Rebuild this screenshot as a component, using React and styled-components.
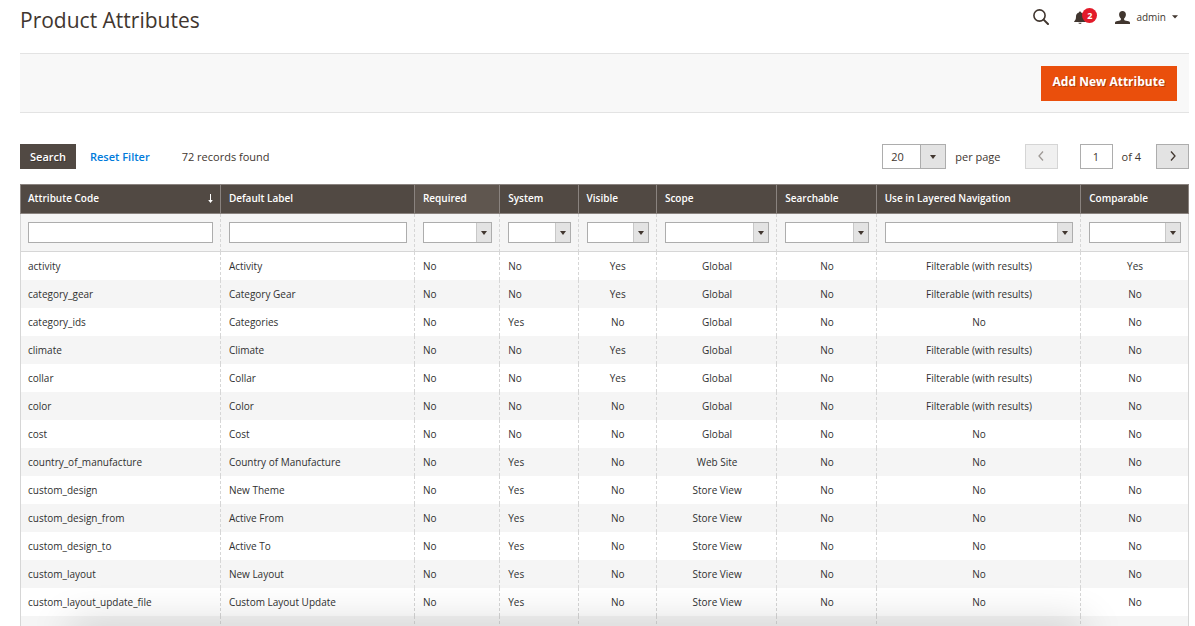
import { useState } from 'react';
import styled, { createGlobalStyle, css } from 'styled-components';

const GlobalStyle = createGlobalStyle`
  *, *::before, *::after {
    box-sizing: border-box;
  }

  body {
    margin: 0;
    background: #fff;
    color: #41362f;
    font-family: 'Open Sans', 'Noto Sans', sans-serif;
    font-size: 11px;
    line-height: 14px;
  }

  button, input, select {
    font: inherit;
    color: inherit;
    border-radius: 0;
    margin: 0;
  }
`;

const Page = styled.div`
  min-height: 100vh;
  padding: 0 6px 0 20px;
`;

const Header = styled.header`
  display: flex;
  align-items: flex-start;
  justify-content: space-between;
  height: 53px;
`;

const PageTitle = styled.h1`
  margin: 0;
  padding-top: 6px;
  font-size: 21px;
  font-weight: 400;
  line-height: 28px;
`;

const HeaderTools = styled.div`
  display: flex;
  align-items: center;
  height: 34px;
  padding-right: 11px;
`;

const ToolButton = styled.button`
  position: relative;
  display: flex;
  align-items: center;
  gap: 6px;
  margin-left: ${({ $space }) => $space || 0}px;
  padding: 0;
  border: 0;
  background: none;
  font-size: 10px;
  cursor: pointer;

  svg {
    display: block;
  }
`;

const Badge = styled.span`
  position: absolute;
  top: -3px;
  left: 8px;
  width: 15px;
  height: 15px;
  border-radius: 50%;
  background: #e21b2a;
  color: #fff;
  font-size: 9px;
  font-weight: 700;
  line-height: 15px;
  text-align: center;
`;

const ActionBar = styled.div`
  display: flex;
  align-items: center;
  justify-content: flex-end;
  height: 60px;
  padding: 0 12px;
  border: 1px solid #e3e3e3;
  border-width: 1px 0;
  background: #f8f8f8;
`;

const PrimaryButton = styled.button`
  height: 35px;
  padding: 0 12px 2px;
  border: 0;
  background: #ea4f0c;
  color: #fff;
  font-size: 12px;
  font-weight: 700;
  text-shadow: 1px 1px 0 rgba(0, 0, 0, 0.25);
  cursor: pointer;
`;

const Toolbar = styled.div`
  display: flex;
  align-items: center;
  justify-content: space-between;
  margin: 31px 0 15px;
`;

const ToolbarGroup = styled.div`
  display: flex;
  align-items: center;
`;

const SearchButton = styled.button`
  height: 25px;
  padding: 0 10px;
  border: 0;
  background: #514943;
  color: #fff;
  font-weight: 600;
  text-shadow: 1px 1px 0 rgba(0, 0, 0, 0.3);
  cursor: pointer;
`;

const ResetButton = styled.button`
  margin-left: 14px;
  padding: 0;
  border: 0;
  background: none;
  color: #007bdb;
  font-weight: 600;
  cursor: pointer;
`;

const RecordCount = styled.span`
  margin-left: 32px;
`;

const SelectBox = styled.span`
  position: relative;
  display: block;
  width: ${({ $large }) => ($large ? '64px' : '100%')};

  &::before {
    content: '';
    position: absolute;
    top: 1px;
    right: 1px;
    bottom: 1px;
    width: ${({ $large }) => ($large ? 25 : 15)}px;
    border-left: 1px solid ${({ $large }) => ($large ? '#adadad' : '#c8c8c8')};
    background: #e3e3e3;
    pointer-events: none;
  }

  &::after {
    content: '';
    position: absolute;
    top: ${({ $large }) => ($large ? 11 : 9)}px;
    right: ${({ $large }) => ($large ? 10 : 5)}px;
    border: 3px solid transparent;
    border-top: 4px solid #41362f;
    border-bottom: 0;
    pointer-events: none;
  }
`;

const fieldStyle = css`
  display: block;
  width: 100%;
  height: 21px;
  padding: 0 6px;
  border: 1px solid #adadad;
  background: #fff;
  appearance: none;
`;

const FilterInput = styled.input`
  ${fieldStyle}
`;

const Select = styled.select`
  ${fieldStyle}

  ${({ $large }) =>
    $large &&
    css`
      height: 25px;
      padding: 0 8px;
    `}
`;

const PerPageLabel = styled.label`
  margin: 0 24px 0 9px;
`;

const PagerButton = styled.button`
  display: flex;
  align-items: center;
  justify-content: center;
  width: 33px;
  height: 25px;
  padding: 0 0 2px;
  border: 1px solid #adadad;
  background: #e3e3e3;
  cursor: pointer;

  &:disabled {
    opacity: 0.5;
    cursor: default;
  }
`;

const PageInput = styled.input`
  width: 33px;
  height: 25px;
  margin-left: 22px;
  padding: 0;
  border: 1px solid #adadad;
  background: #fff;
  text-align: center;
`;

const PageTotal = styled.label`
  margin: 0 15px 0 9px;
`;

const Grid = styled.table`
  width: 100%;
  table-layout: fixed;
  border-collapse: separate;
  border-spacing: 0;
  font-size: 10px;
`;

const Col = styled.col`
  width: ${({ $width }) => $width}%;
`;

const HeadCell = styled.th`
  height: 30px;
  padding: 0 7px 2px 8px;
  border: 1px solid #8a837f;
  border-right-width: 0;
  background: ${({ $hovered }) => ($hovered ? '#5f564f' : '#514943')};
  color: #fff;
  font-weight: 600;
  text-align: left;
  white-space: nowrap;

  &:first-child {
    padding-left: 7px;
  }

  &:last-child {
    border-right-width: 1px;
  }
`;

const HeadLabel = styled.span`
  display: flex;
  align-items: center;
  justify-content: space-between;
`;

const cellBorders = css`
  border-left: 1px dashed #d6d6d6;

  &:first-child {
    padding-left: 7px;
    border-left: 1px solid #d6d6d6;
  }

  &:last-child {
    border-right: 1px solid #d6d6d6;
  }
`;

const FilterCell = styled.td`
  padding: 8px 7px 8px 8px;
  border-bottom: 1px solid #d6d6d6;
  background: #f5f5f5;
  ${cellBorders}
`;

const Cell = styled.td`
  height: 28px;
  padding: 0 7px 0 8px;
  color: #303030;
  text-align: ${({ $align }) => $align || 'left'};
  ${cellBorders}
`;

const Row = styled.tr`
  background: #fff;

  &:nth-child(even) {
    background: #f5f5f5;
  }
`;

const BottomShade = styled.div`
  position: fixed;
  right: 110px;
  bottom: -20px;
  left: 70px;
  height: 20px;
  box-shadow: 0 0 40px rgba(0, 0, 0, 0.24);
  pointer-events: none;
`;

const columns = [
  { key: 'code', label: 'Attribute Code', width: 17.1, filter: 'text', sorted: true },
  { key: 'label', label: 'Default Label', width: 16.6, filter: 'text' },
  { key: 'required', label: 'Required', width: 7.3, filter: 'select', hovered: true },
  { key: 'system', label: 'System', width: 6.7, filter: 'select' },
  { key: 'visible', label: 'Visible', width: 6.7, filter: 'select', align: 'center' },
  { key: 'scope', label: 'Scope', width: 10.3, filter: 'select', align: 'center' },
  { key: 'searchable', label: 'Searchable', width: 8.5, filter: 'select', align: 'center' },
  { key: 'layered', label: 'Use in Layered Navigation', width: 17.5, filter: 'select', align: 'center' },
  { key: 'comparable', label: 'Comparable', width: 9.3, filter: 'select', align: 'center' },
];

const FILTERABLE = 'Filterable (with results)';

const attributes = [
  ['activity', 'Activity', 'No', 'No', 'Yes', 'Global', 'No', FILTERABLE, 'Yes'],
  ['category_gear', 'Category Gear', 'No', 'No', 'Yes', 'Global', 'No', FILTERABLE, 'No'],
  ['category_ids', 'Categories', 'No', 'Yes', 'No', 'Global', 'No', 'No', 'No'],
  ['climate', 'Climate', 'No', 'No', 'Yes', 'Global', 'No', FILTERABLE, 'No'],
  ['collar', 'Collar', 'No', 'No', 'Yes', 'Global', 'No', FILTERABLE, 'No'],
  ['color', 'Color', 'No', 'No', 'No', 'Global', 'No', FILTERABLE, 'No'],
  ['cost', 'Cost', 'No', 'No', 'No', 'Global', 'No', 'No', 'No'],
  ['country_of_manufacture', 'Country of Manufacture', 'No', 'Yes', 'No', 'Web Site', 'No', 'No', 'No'],
  ['custom_design', 'New Theme', 'No', 'Yes', 'No', 'Store View', 'No', 'No', 'No'],
  ['custom_design_from', 'Active From', 'No', 'Yes', 'No', 'Store View', 'No', 'No', 'No'],
  ['custom_design_to', 'Active To', 'No', 'Yes', 'No', 'Store View', 'No', 'No', 'No'],
  ['custom_layout', 'New Layout', 'No', 'Yes', 'No', 'Store View', 'No', 'No', 'No'],
  ['custom_layout_update_file', 'Custom Layout Update', 'No', 'Yes', 'No', 'Store View', 'No', 'No', 'No'],
  ['', '', '', '', '', '', '', '', ''],
];

const SearchIcon = () => (
  <svg width="16" height="16" viewBox="0 0 16 16" fill="none" stroke="#41362f">
    <circle cx="6.5" cy="6.5" r="5.6" strokeWidth="1.6" />
    <path d="M10.6 10.6 L15 15" strokeWidth="2" strokeLinecap="round" />
  </svg>
);

const BellIcon = () => (
  <svg width="12" height="13" viewBox="0 0 12 13" fill="#41362f">
    <path d="M6 0.4c.6 0 1 .4 1 1C8.9 1.9 10 3.4 10 5.4c0 2.6.6 3.6 1.8 4.8v.9H.2v-.9C1.4 9 2 8 2 5.4c0-2 1.1-3.5 3-4 0-.6.4-1 1-1z" />
    <path d="M4.4 11.7h3.2c-.2.8-.8 1.2-1.6 1.2s-1.400-.4-1.600-1.200z" />
  </svg>
);

const UserIcon = () => (
  <svg width="15" height="13" viewBox="0 0 15 13" fill="#41362f">
    <path d="M7.5 0c2.100 0 3.400 1.400 3.400 3.400 0 1.700-.7 3.200-1.800 4v1.200c0 .5.300.7.800.9l3.600.8c1 .3 1.400.8 1.500 1.600V13H0v-1.100c.1-.8.500-1.300 1.500-1.600l3.600-.8c.5-.2.800-.4.800-.9V7.400c-1.100-.8-1.800-2.300-1.800-4C4.100 1.400 5.400 0 7.500 0z" />
  </svg>
);

const CaretIcon = () => (
  <svg width="6" height="4" viewBox="0 0 6 4" fill="#41362f">
    <path d="M0 0.3h6L3 3.5z" />
  </svg>
);

const Chevron = ({ d }) => (
  <svg width="8" height="10" viewBox="0 0 8 10" fill="none" stroke="#41362f" strokeWidth="1.3">
    <path d={d} />
  </svg>
);

const SortArrow = () => (
  <svg width="5" height="9" viewBox="0 0 5 9" fill="#fff">
    <path d="M2 0h1v6h1.800L2.500 9 .2 6H2z" />
  </svg>
);

const Filter = ({ column }) => {
  if (column.filter === 'text') {
    return <FilterInput type="text" name={column.key} aria-label={column.label} />;
  }

  return (
    <SelectBox>
      <Select name={column.key} aria-label={column.label} defaultValue="">
        <option value="" aria-label="Any" />
      </Select>
    </SelectBox>
  );
};

const App = () => {
  const [page, setPage] = useState(1);
  const totalPages = 4;

  return (
    <Page>
      <GlobalStyle />

      <Header>
        <PageTitle>Product Attributes</PageTitle>
        <HeaderTools>
          <ToolButton type="button" aria-label="Search">
            <SearchIcon />
          </ToolButton>
          <ToolButton type="button" aria-label="Notifications" $space={25}>
            <BellIcon />
            <Badge>2</Badge>
          </ToolButton>
          <ToolButton type="button" $space={29}>
            <UserIcon />
            admin
            <CaretIcon />
          </ToolButton>
        </HeaderTools>
      </Header>

      <ActionBar>
        <PrimaryButton type="button">Add New Attribute</PrimaryButton>
      </ActionBar>

      <Toolbar>
        <ToolbarGroup>
          <SearchButton type="button">Search</SearchButton>
          <ResetButton type="button">Reset Filter</ResetButton>
          <RecordCount>72 records found</RecordCount>
        </ToolbarGroup>

        <ToolbarGroup>
          <SelectBox $large>
            <Select id="per-page" defaultValue="20" $large>
              <option value="20">20</option>
            </Select>
          </SelectBox>
          <PerPageLabel htmlFor="per-page">per page</PerPageLabel>
          <PagerButton
            type="button"
            aria-label="Previous page"
            disabled={page === 1}
            onClick={() => setPage(page - 1)}
          >
            <Chevron d="M6 0.5 L2 5 L6 9.5" />
          </PagerButton>
          <PageInput
            id="current-page"
            type="text"
            value={page}
            onChange={(e) => setPage(Number(e.target.value) || 1)}
          />
          <PageTotal htmlFor="current-page">of {totalPages}</PageTotal>
          <PagerButton
            type="button"
            aria-label="Next page"
            disabled={page >= totalPages}
            onClick={() => setPage(page + 1)}
          >
            <Chevron d="M2 0.5 L6 5 L2 9.5" />
          </PagerButton>
        </ToolbarGroup>
      </Toolbar>

      <Grid>
        <colgroup>
          {columns.map((column) => (
            <Col key={column.key} $width={column.width} />
          ))}
        </colgroup>
        <thead>
          <tr>
            {columns.map((column) => (
              <HeadCell key={column.key} scope="col" $hovered={column.hovered}>
                <HeadLabel>
                  {column.label}
                  {column.sorted && <SortArrow />}
                </HeadLabel>
              </HeadCell>
            ))}
          </tr>
          <tr>
            {columns.map((column) => (
              <FilterCell key={column.key}>
                <Filter column={column} />
              </FilterCell>
            ))}
          </tr>
        </thead>
        <tbody>
          {attributes.map((attribute) => (
            <Row key={attribute[0]}>
              {columns.map((column, index) => (
                <Cell key={column.key} $align={column.align}>
                  {attribute[index]}
                </Cell>
              ))}
            </Row>
          ))}
        </tbody>
      </Grid>

      <BottomShade />
    </Page>
  );
};

export default App;
